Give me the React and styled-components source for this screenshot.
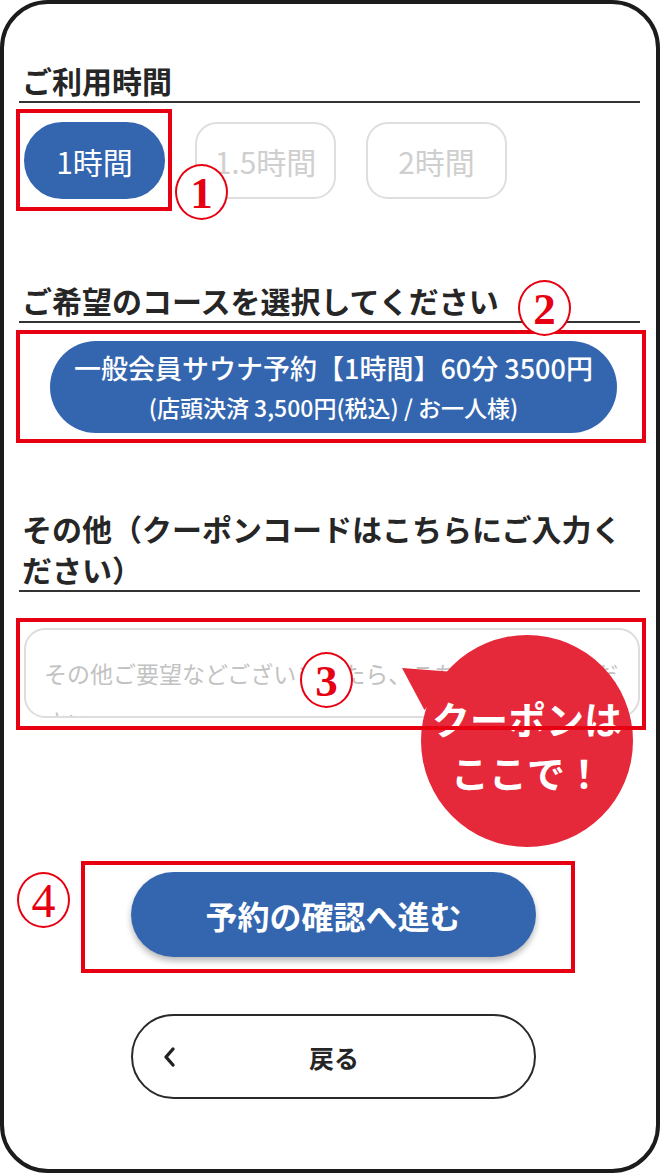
import React from "react";
import styled, { createGlobalStyle } from "styled-components";

const GlobalStyle = createGlobalStyle`
  html, body {
    margin: 0;
    padding: 0;
    background: #fff;
  }
  * {
    box-sizing: border-box;
  }
`;

const jp = `"Noto Sans CJK JP", "Noto Sans", sans-serif`;

export default function App() {
  return (
    <>
      <GlobalStyle />
      <Frame>
        <Heading>ご利用時間</Heading>
        <TimeRow>
          <Annotated>
            <TimeButton $active>1時間</TimeButton>
            <RedFrame $t={-13} $l={-8} $r={-7} $b={-12} />
          </Annotated>
          <TimeButton>1.5時間</TimeButton>
          <TimeButton>2時間</TimeButton>
        </TimeRow>

        <Heading $gap={81}>ご希望のコースを選択してください</Heading>
        <Annotated $mt={18}>
          <CourseButton>
            <CourseTitle>一般会員サウナ予約【1時間】60分 3500円</CourseTitle>
            <CourseNote>(店頭決済 3,500円(税込) / お一人様)</CourseNote>
          </CourseButton>
          <RedFrame $t={-11} $l={-3} $r={-6} $b={-10} />
        </Annotated>

        <Heading $gap={75}>その他（クーポンコードはこちらにご入力ください）</Heading>
        <Annotated $mt={36}>
          <Notes
            readOnly
            placeholder="その他ご要望などございましたら、こちらにお書きください"
          />
          <RedFrame $t={-10} $l={-3} $r={-6} $b={-12} />
        </Annotated>

        <Annotated $mt={154} $ml={112} $fit>
          <SubmitButton>予約の確認へ進む</SubmitButton>
          <RedFrame $t={-11} $l={-50} $r={-39} $b={-16} />
        </Annotated>

        <BackButton>
          <Chevron viewBox="0 0 14 22">
            <polyline points="11,3 4,11 11,19" />
          </Chevron>
          <BackLabel>戻る</BackLabel>
          <span />
        </BackButton>

        <Badge $x={171} $y={160} $bold>1</Badge>
        <Badge $x={514} $y={276} $bold>2</Badge>
        <Badge $x={296} $y={648} $bold>3</Badge>
        <Badge $x={13} $y={868}>4</Badge>

        <Bubble>
          <BubbleText>
            クーポンは
            <br />
            ここで！
          </BubbleText>
        </Bubble>
      </Frame>
    </>
  );
}

const Frame = styled.div`
  position: relative;
  width: 660px;
  height: 1173px;
  border: 4px solid #1c1c1c;
  border-radius: 48px;
  background: #fff;
  padding: 56px 16px 0 15px;
  overflow: hidden;
  display: flex;
  flex-direction: column;
  font-family: ${jp};
`;

const Heading = styled.h2`
  margin: ${(p) => p.$gap || 0}px 0 0;
  padding: 0 0 0 3px;
  font-size: 30px;
  line-height: 41px;
  font-weight: 700;
  color: #262626;
  border-bottom: 2px solid #333;
`;

const TimeRow = styled.div`
  display: flex;
  gap: 30px;
  margin: 19px 0 0 5px;
`;

const Annotated = styled.div`
  position: relative;
  display: flex;
  align-self: ${(p) => (p.$fit ? "flex-start" : "stretch")};
  margin: ${(p) => p.$mt || 0}px 0 0 ${(p) => p.$ml || 0}px;
`;

const RedFrame = styled.span`
  position: absolute;
  top: ${(p) => p.$t}px;
  left: ${(p) => p.$l}px;
  right: ${(p) => p.$r}px;
  bottom: ${(p) => p.$b}px;
  border: 4px solid #e60012;
  pointer-events: none;
  z-index: 3;
`;

const TimeButton = styled.button`
  width: 141px;
  height: 77px;
  padding: 0;
  font-family: ${jp};
  font-size: 30px;
  font-weight: 400;
  border-radius: ${(p) => (p.$active ? "39px" : "22px")};
  border: 2px solid ${(p) => (p.$active ? "#3466b0" : "#dedede")};
  background: ${(p) => (p.$active ? "#3466b0" : "#fff")};
  color: ${(p) => (p.$active ? "#fff" : "#cfcfcf")};
`;

const CourseButton = styled.button`
  margin-left: 31px;
  width: 567px;
  height: 92px;
  border: none;
  border-radius: 46px;
  background: #3466b0;
  color: #fff;
  font-family: ${jp};
  display: flex;
  flex-direction: column;
  align-items: center;
  justify-content: center;
  padding: 0;
`;

const CourseTitle = styled.span`
  font-size: 27px;
  line-height: 40px;
  font-weight: 500;
`;

const CourseNote = styled.span`
  font-size: 23px;
  line-height: 38px;
  font-weight: 500;
`;

const Notes = styled.textarea`
  margin-left: 5px;
  width: 616px;
  height: 90px;
  border: 2px solid #dddddd;
  border-radius: 21px;
  padding: 19px 18px 0;
  font-family: ${jp};
  font-size: 23px;
  line-height: 48px;
  resize: none;
  overflow: hidden;
  outline: none;
  color: #333;
  background: #fff;

  &::placeholder {
    color: #c2c2c2;
  }
`;

const SubmitButton = styled.button`
  width: 405px;
  height: 85px;
  border: none;
  border-radius: 43px;
  background: #3466b0;
  color: #fff;
  font-family: ${jp};
  font-size: 32px;
  font-weight: 700;
  box-shadow: 0 4px 6px rgba(0, 0, 0, 0.28);
`;

const BackButton = styled.button`
  margin: 57px 0 0 112px;
  width: 405px;
  height: 85px;
  border: 2px solid #2a2a2a;
  border-radius: 43px;
  background: #fff;
  display: grid;
  grid-template-columns: 1fr auto 1fr;
  align-items: center;
  padding: 0 0 0 29px;
`;

const Chevron = styled.svg`
  width: 14px;
  height: 22px;
  fill: none;
  stroke: #222;
  stroke-width: 3.4;
  stroke-linecap: round;
  stroke-linejoin: round;
`;

const BackLabel = styled.span`
  font-family: ${jp};
  font-size: 25px;
  font-weight: 700;
  color: #262626;
  margin-left: -28px;
`;

const Badge = styled.span`
  position: absolute;
  left: ${(p) => p.$x}px;
  top: ${(p) => p.$y}px;
  width: 53px;
  height: 56px;
  border: 2px solid #e60012;
  border-radius: 50%;
  background: #fff;
  color: #e60012;
  display: flex;
  align-items: center;
  justify-content: center;
  font-family: "Liberation Serif", "DejaVu Serif", serif;
  font-size: ${(p) => (p.$bold ? "45px" : "48px")};
  font-weight: ${(p) => (p.$bold ? 700 : 400)};
  line-height: 1;
  padding-top: 2px;
  z-index: 4;
`;

const Bubble = styled.div`
  position: absolute;
  left: 417px;
  top: 631px;
  width: 212px;
  height: 212px;
  border-radius: 50%;
  background: #e6283b;
  display: flex;
  align-items: center;
  justify-content: center;
  z-index: 2;

  &::before {
    content: "";
    position: absolute;
    left: -19px;
    top: 33px;
    width: 56px;
    height: 42px;
    background: #e6283b;
    clip-path: polygon(0 0, 100% 10%, 40% 100%);
  }
`;

const BubbleText = styled.div`
  position: relative;
  margin-top: 8px;
  font-family: ${jp};
  font-size: 38px;
  line-height: 54px;
  font-weight: 700;
  color: #fff;
  text-align: center;
`;
